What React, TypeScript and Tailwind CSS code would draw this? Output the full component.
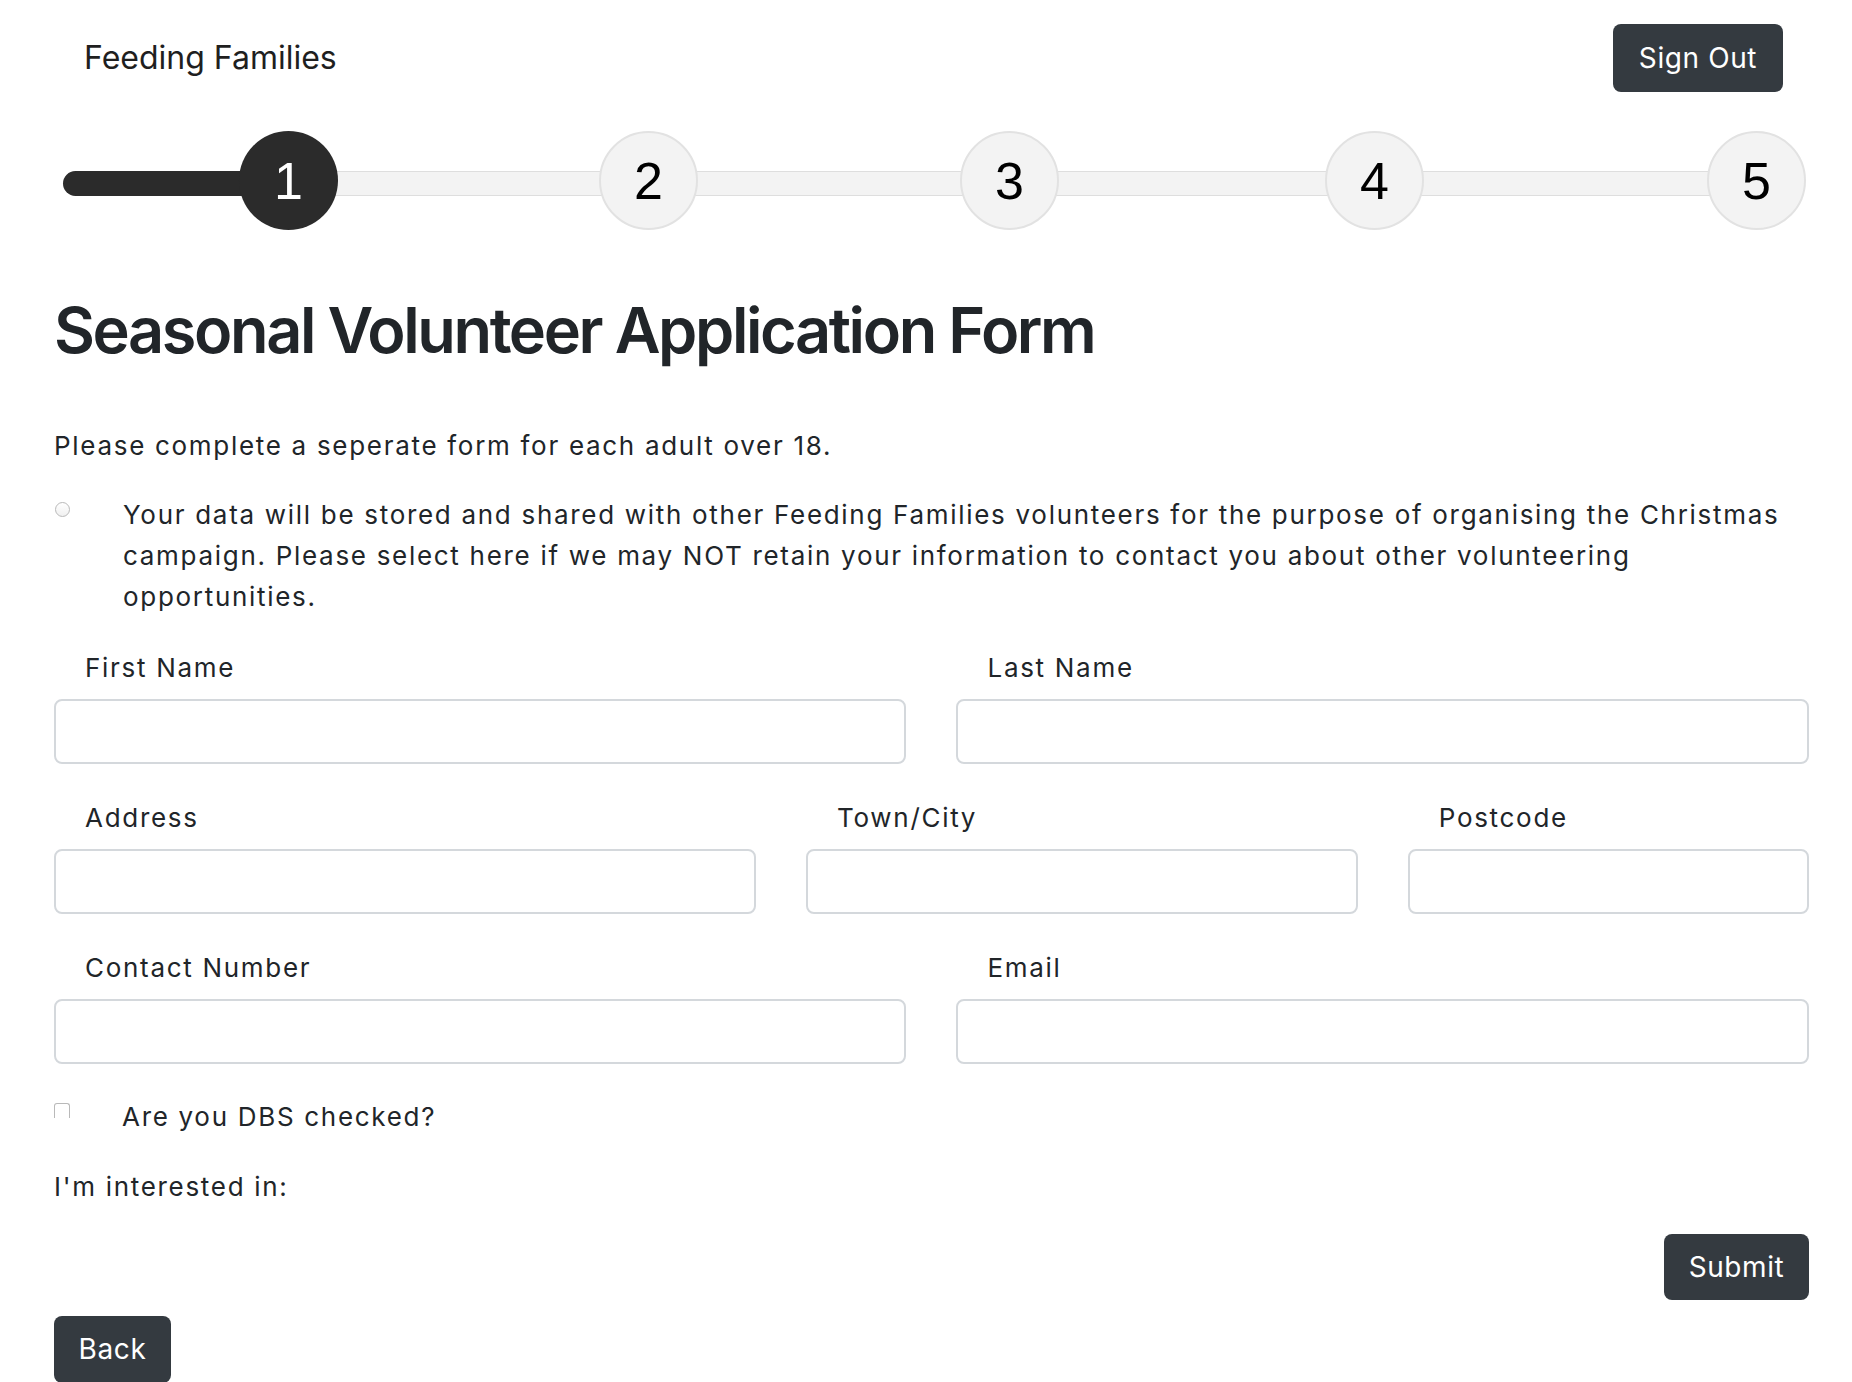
import React from "react";

const steps = [
  { n: 1, pos: "left-[239px]", active: true },
  { n: 2, pos: "left-[599px]", active: false },
  { n: 3, pos: "left-[960px]", active: false },
  { n: 4, pos: "left-[1325px]", active: false },
  { n: 5, pos: "left-[1707px]", active: false },
];

function Field({ label, span }: { label: string; span: string }) {
  return (
    <div className={span}>
      <label className="block pl-[31px] text-[26px] leading-[41px] tracking-[1.7px] mb-[11px]">{label}</label>
      <div className="h-[65px] rounded-[8px] border-2 border-[#d4d8dc] bg-white" />
    </div>
  );
}

export default function App() {
  return (
    <div className="min-h-screen bg-white text-[#212529] font-['Inter','Liberation_Sans',sans-serif]">
      {/* Top bar */}
      <header className="flex items-center justify-between pl-[84px] pr-[69px] pt-[24px]">
        <span className="text-[32px] leading-[40px] text-[#1f1f1f]">Feeding Families</span>
        <button className="h-[68px] w-[170px] rounded-[8px] bg-[#343a40] text-white text-[28px] tracking-[0.6px]">
          Sign Out
        </button>
      </header>

      {/* Stepper */}
      <div className="relative mt-[39px] h-[100px]">
        <div className="absolute left-[63px] top-[40px] h-[25px] w-[1697px] rounded-full border border-[#dedede] bg-[#f3f3f3]" />
        <div className="absolute left-[63px] top-[40px] h-[25px] w-[230px] rounded-full bg-[#2b2b2b]" />
        {steps.map((s) => (
          <div
            key={s.n}
            className={`absolute top-0 ${s.pos} flex h-[99px] w-[99px] items-center justify-center rounded-full font-['Liberation_Sans',Arial,sans-serif] text-[52px] ${
              s.active ? "bg-[#2b2b2b] text-white" : "border-2 border-[#e2e2e2] bg-[#f3f3f3] text-black"
            }`}
          >
            {s.n}
          </div>
        ))}
      </div>

      {/* Form */}
      <main className="ml-[54px] w-[1755px] text-[26px] leading-[41px] tracking-[1.7px]">
        <h1 className="mt-[61px] text-[63px] leading-[76px] font-semibold tracking-[-2.4px]">
          Seasonal Volunteer Application Form
        </h1>

        <p className="mt-[57px]">Please complete a seperate form for each adult over 18.</p>

        <div className="mt-[28px] flex">
          <div className="w-[69px] shrink-0">
            <div className="ml-[1px] mt-[8px] h-[15px] w-[15px] rounded-full border border-[#b9b9b9] bg-gradient-to-b from-white to-[#f0f0f0]" />
          </div>
          <p>
            Your data will be stored and shared with other Feeding Families volunteers for the purpose of organising the
            Christmas campaign. Please select here if we may NOT retain your information to contact you about other
            volunteering opportunities.
          </p>
        </div>

        <div className="mt-[30px] grid grid-cols-12 gap-x-[50px] gap-y-[33px]">
          <Field label="First Name" span="col-span-6" />
          <Field label="Last Name" span="col-span-6" />
          <Field label="Address" span="col-span-5" />
          <Field label="Town/City" span="col-span-4" />
          <Field label="Postcode" span="col-span-3" />
          <Field label="Contact Number" span="col-span-6" />
          <Field label="Email" span="col-span-6" />
        </div>

        <div className="mt-[32px] flex">
          <div className="w-[68px] shrink-0">
            <div className="mt-[7px] h-[15px] w-[16px] rounded-t-[3px] border border-b-0 border-[#b9b9b9]" />
          </div>
          <span>Are you DBS checked?</span>
        </div>

        <p className="mt-[29px]">I'm interested in:</p>

        <div className="mt-[27px] flex justify-end">
          <button className="h-[66px] w-[145px] rounded-[8px] bg-[#343a40] text-white text-[28px] tracking-[0.6px]">
            Submit
          </button>
        </div>

        <button className="mt-[16px] h-[67px] w-[117px] rounded-[8px] bg-[#343a40] text-white text-[28px] tracking-[0.6px]">
          Back
        </button>
      </main>
    </div>
  );
}
